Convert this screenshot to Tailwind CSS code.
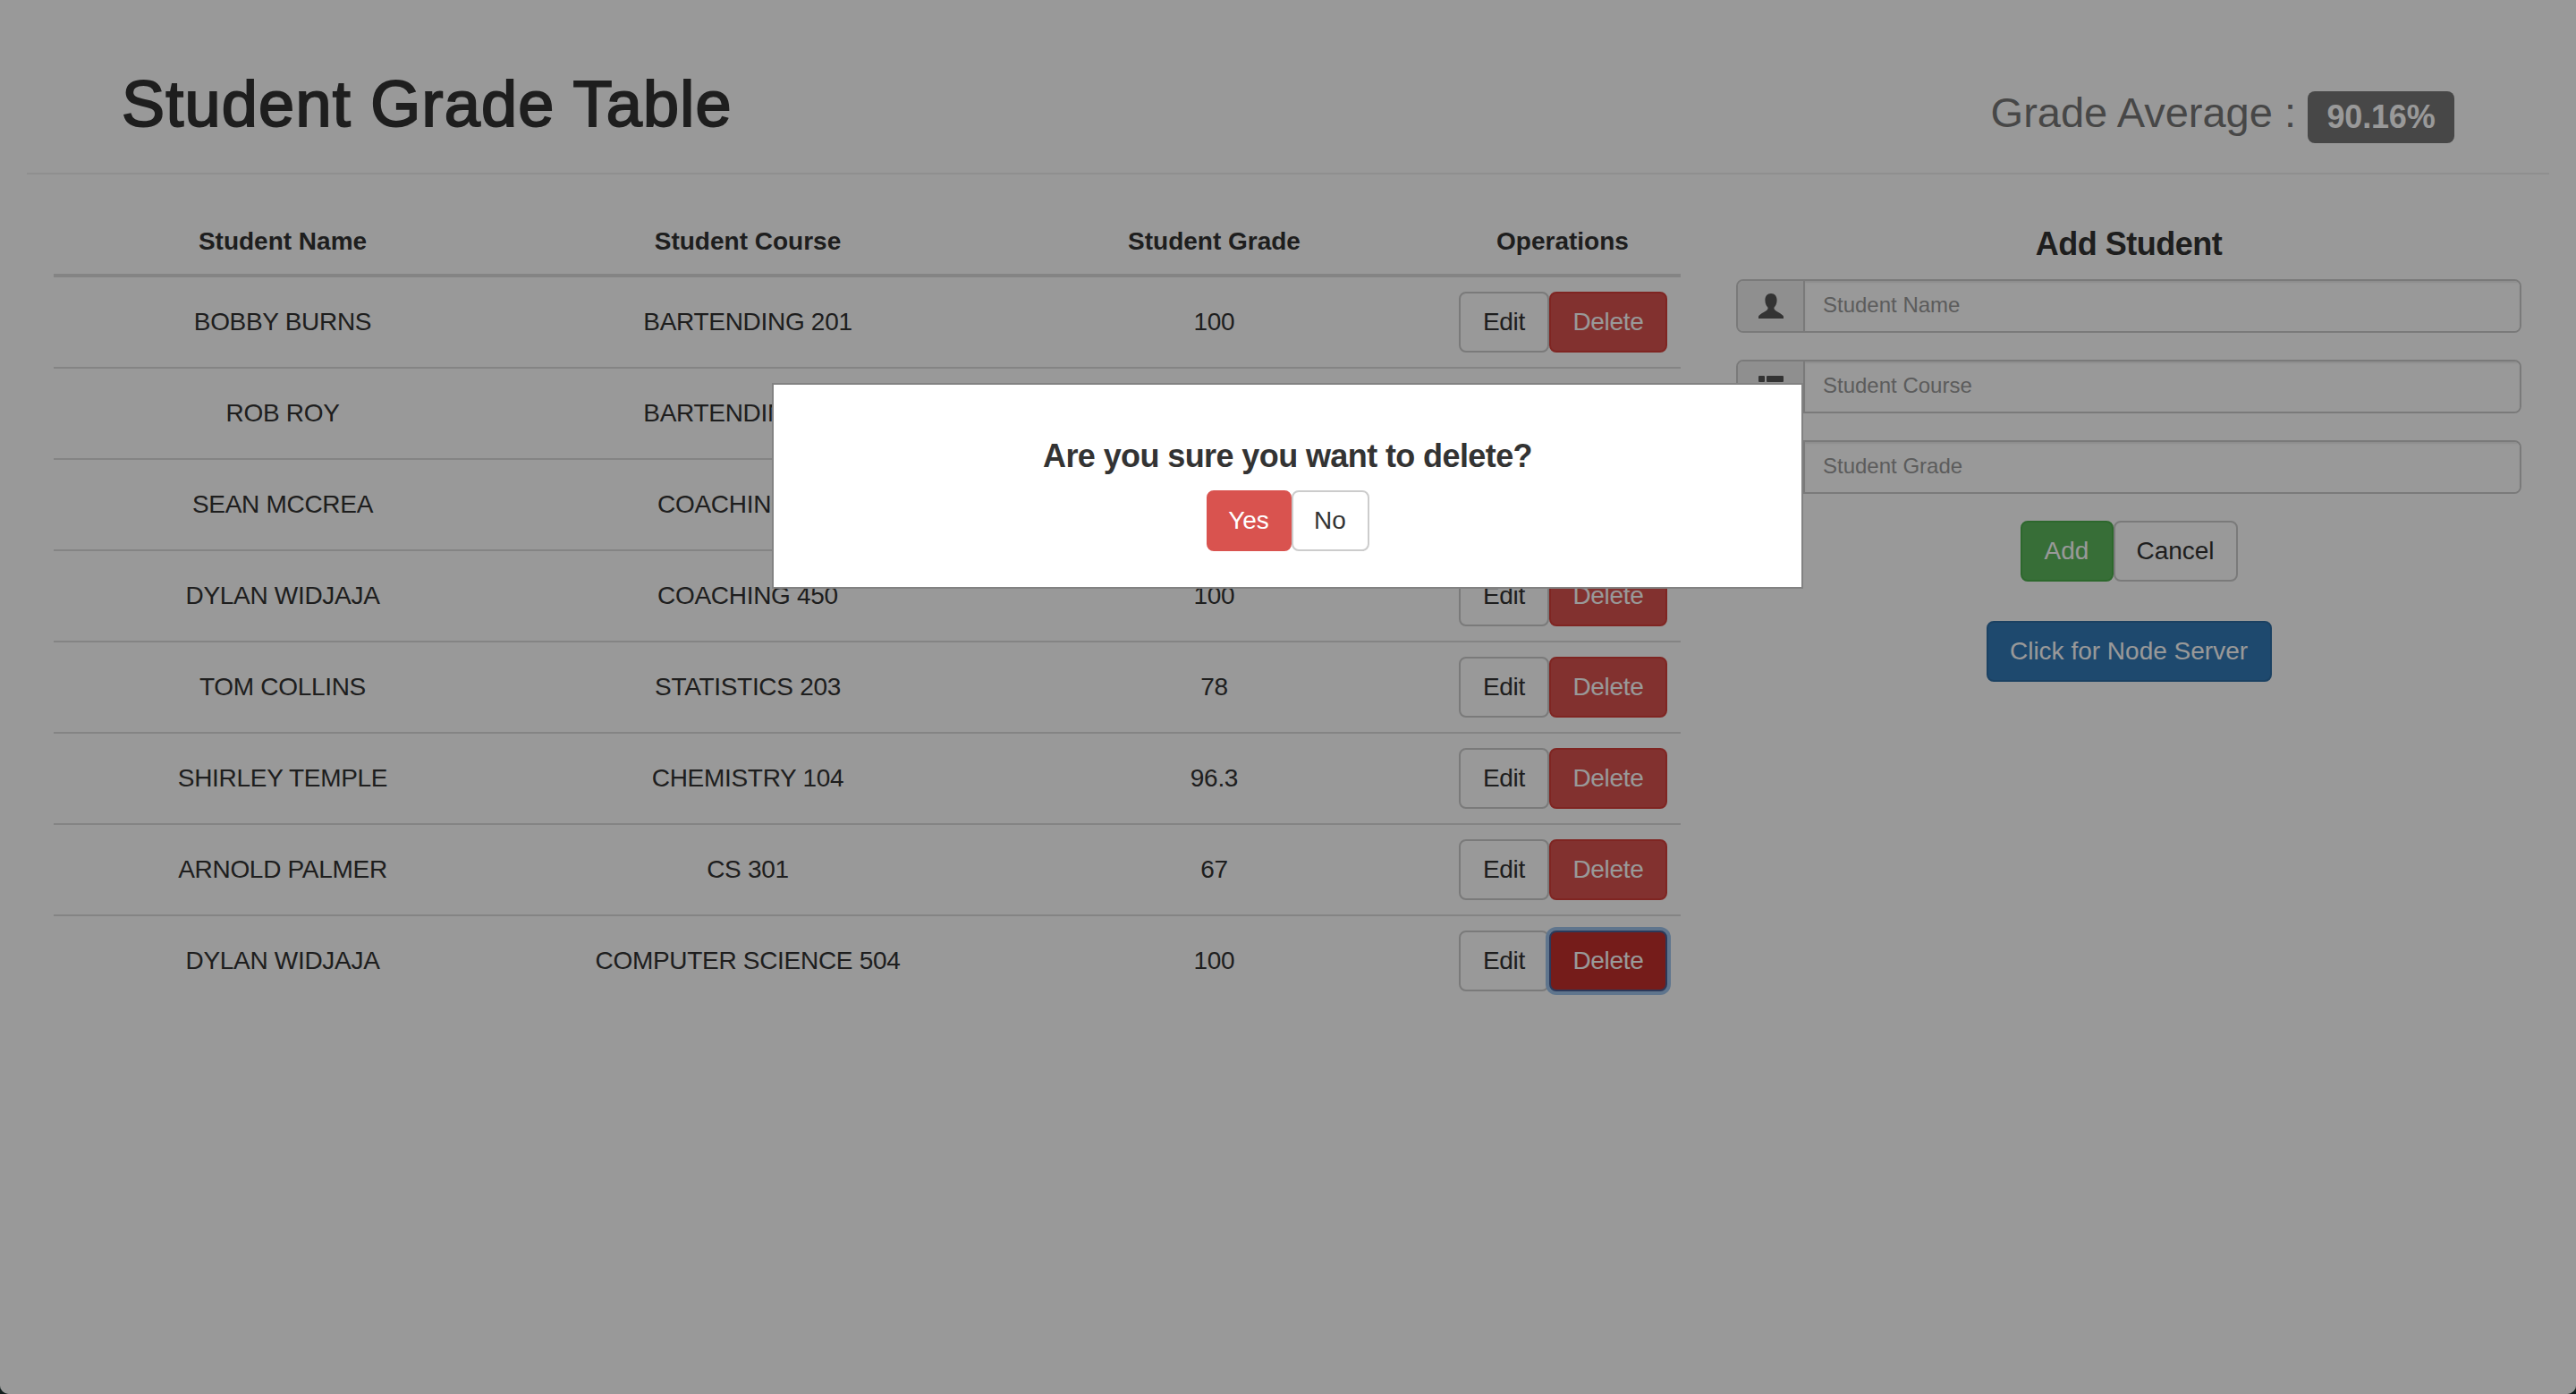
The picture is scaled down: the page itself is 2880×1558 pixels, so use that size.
<!DOCTYPE html>
<html lang="en">
<head>
    <meta charset="UTF-8">
    <title>Student Grade Table</title>
    <script src="https://cdn.jsdelivr.net/npm/@tailwindcss/browser@4"></script>
</head>
<body class="bg-[#14201f] overflow-hidden">
    <div class="relative h-[1558px] overflow-hidden rounded-b-[10px] bg-white font-['Liberation_Sans',Arial,sans-serif] text-[28px] leading-[40px] text-[#333]">
        <!-- Page header -->
        <header class="mx-[30px] flex h-[195px] justify-between border-b-2 border-[#eee]">
            <h1 class="pl-[106px] pt-[80px] text-[72px] leading-[72px] font-normal tracking-[1.25px] text-[#333] [-webkit-text-stroke:2px_#333]">Student Grade Table</h1>
            <div class="flex items-start gap-[13px] pr-[106px] pt-[102px]">
                <span class="text-[47px] leading-[48px] text-[#777]">Grade Average :</span>
                <span class="flex h-[58px] w-[164px] items-center justify-center rounded-lg bg-[#777] text-[36px] font-bold tracking-[-0.2px] text-white">90.16%</span>
            </div>
        </header>

        <main class="ml-[60px] flex gap-[62px] pt-[39px]">
            <!-- Grade table -->
            <table class="h-fit w-[1819px] table-fixed border-separate border-spacing-0 text-center">
                <thead>
                    <tr class="h-[76px]">
                        <th class="w-[512px] border-b-4 border-[#ddd] font-bold">Student Name</th>
                        <th class="w-[528px] border-b-4 border-[#ddd] font-bold">Student Course</th>
                        <th class="w-[515px] border-b-4 border-[#ddd] font-bold">Student Grade</th>
                        <th class="w-[264px] border-b-4 border-[#ddd] font-bold">Operations</th>
                    </tr>
                </thead>
                <tbody class="tracking-[-0.3px]">
                    <tr>
                        <td>BOBBY BURNS</td>
                        <td>BARTENDING 201</td>
                        <td>100</td>
                        <td class="py-4 pl-4">
                            <div class="flex">
                                <button class="h-[68px] w-[101px] rounded-lg border-2 border-[#ccc] bg-white">Edit</button>
                                <button class="h-[68px] w-[132px] rounded-lg border-2 border-[#d43f3a] bg-[#d9534f] text-white">Delete</button>
                            </div>
                        </td>
                    </tr>
                    <tr>
                        <td class="border-t-2 border-[#ddd]">ROB ROY</td>
                        <td class="border-t-2 border-[#ddd]">BARTENDING 201</td>
                        <td class="border-t-2 border-[#ddd]">90</td>
                        <td class="border-t-2 border-[#ddd] py-4 pl-4">
                            <div class="flex">
                                <button class="h-[68px] w-[101px] rounded-lg border-2 border-[#ccc] bg-white">Edit</button>
                                <button class="h-[68px] w-[132px] rounded-lg border-2 border-[#d43f3a] bg-[#d9534f] text-white">Delete</button>
                            </div>
                        </td>
                    </tr>
                    <tr>
                        <td class="border-t-2 border-[#ddd]">SEAN MCCREA</td>
                        <td class="border-t-2 border-[#ddd]">COACHING 450</td>
                        <td class="border-t-2 border-[#ddd]">90</td>
                        <td class="border-t-2 border-[#ddd] py-4 pl-4">
                            <div class="flex">
                                <button class="h-[68px] w-[101px] rounded-lg border-2 border-[#ccc] bg-white">Edit</button>
                                <button class="h-[68px] w-[132px] rounded-lg border-2 border-[#d43f3a] bg-[#d9534f] text-white">Delete</button>
                            </div>
                        </td>
                    </tr>
                    <tr>
                        <td class="border-t-2 border-[#ddd]">DYLAN WIDJAJA</td>
                        <td class="border-t-2 border-[#ddd]">COACHING 450</td>
                        <td class="border-t-2 border-[#ddd]">100</td>
                        <td class="border-t-2 border-[#ddd] py-4 pl-4">
                            <div class="flex">
                                <button class="h-[68px] w-[101px] rounded-lg border-2 border-[#ccc] bg-white">Edit</button>
                                <button class="h-[68px] w-[132px] rounded-lg border-2 border-[#d43f3a] bg-[#d9534f] text-white">Delete</button>
                            </div>
                        </td>
                    </tr>
                    <tr>
                        <td class="border-t-2 border-[#ddd]">TOM COLLINS</td>
                        <td class="border-t-2 border-[#ddd]">STATISTICS 203</td>
                        <td class="border-t-2 border-[#ddd]">78</td>
                        <td class="border-t-2 border-[#ddd] py-4 pl-4">
                            <div class="flex">
                                <button class="h-[68px] w-[101px] rounded-lg border-2 border-[#ccc] bg-white">Edit</button>
                                <button class="h-[68px] w-[132px] rounded-lg border-2 border-[#d43f3a] bg-[#d9534f] text-white">Delete</button>
                            </div>
                        </td>
                    </tr>
                    <tr>
                        <td class="border-t-2 border-[#ddd]">SHIRLEY TEMPLE</td>
                        <td class="border-t-2 border-[#ddd]">CHEMISTRY 104</td>
                        <td class="border-t-2 border-[#ddd]">96.3</td>
                        <td class="border-t-2 border-[#ddd] py-4 pl-4">
                            <div class="flex">
                                <button class="h-[68px] w-[101px] rounded-lg border-2 border-[#ccc] bg-white">Edit</button>
                                <button class="h-[68px] w-[132px] rounded-lg border-2 border-[#d43f3a] bg-[#d9534f] text-white">Delete</button>
                            </div>
                        </td>
                    </tr>
                    <tr>
                        <td class="border-t-2 border-[#ddd]">ARNOLD PALMER</td>
                        <td class="border-t-2 border-[#ddd]">CS 301</td>
                        <td class="border-t-2 border-[#ddd]">67</td>
                        <td class="border-t-2 border-[#ddd] py-4 pl-4">
                            <div class="flex">
                                <button class="h-[68px] w-[101px] rounded-lg border-2 border-[#ccc] bg-white">Edit</button>
                                <button class="h-[68px] w-[132px] rounded-lg border-2 border-[#d43f3a] bg-[#d9534f] text-white">Delete</button>
                            </div>
                        </td>
                    </tr>
                    <tr>
                        <td class="border-t-2 border-[#ddd]">DYLAN WIDJAJA</td>
                        <td class="border-t-2 border-[#ddd]">COMPUTER SCIENCE 504</td>
                        <td class="border-t-2 border-[#ddd]">100</td>
                        <td class="border-t-2 border-[#ddd] py-4 pl-4">
                            <div class="flex">
                                <button class="h-[68px] w-[101px] rounded-lg border-2 border-[#ccc] bg-white">Edit</button>
                                <button class="h-[68px] w-[132px] rounded-lg border-2 border-[#4a5f96] bg-[#c42f2c] text-white shadow-[0_0_0_4px_#9ec4ec]">Delete</button>
                            </div>
                        </td>
                    </tr>
                </tbody>
            </table>

            <!-- Add student form -->
            <aside class="flex w-[878px] flex-col items-center">
                <h4 class="mt-[19px] mb-[19px] text-[36px] leading-[40px] font-bold tracking-[-0.5px]">Add Student</h4>
                <div class="flex w-full flex-col gap-[30px]">
                    <div class="flex h-[60px] overflow-hidden rounded-lg border-2 border-[#ccc]">
                        <span class="flex w-[75px] items-center justify-center border-r-2 border-[#ccc] bg-[#eee] text-[#555]">
                            <svg class="h-[28px] w-[28px]" viewBox="0 0 28 28" fill="currentColor"><path d="M14 0C9.800 0 7.400 3 7.400 7.500c0 3.500 1.300 6.300 3 8 .3 1 .2 2-.6 2.700C8 20 3 22 .3 25 0 25.500 0 26.500 0 28h28c0-1.500 0-2.500-.3-3-2.700-3-7.700-5-9.500-6.800-.8-.7-.9-1.700-.6-2.700 1.700-1.700 3-4.500 3-8C20.600 3 18.200 0 14 0z"/></svg>
                        </span>
                        <input class="min-w-0 flex-1 bg-white px-[20px] pb-[2px] text-[24px] shadow-[inset_0_2px_2px_rgba(0,0,0,0.075)] outline-none placeholder:text-[#999]" placeholder="Student Name">
                    </div>
                    <div class="flex h-[60px] overflow-hidden rounded-lg border-2 border-[#ccc]">
                        <span class="flex w-[75px] items-center justify-center border-r-2 border-[#ccc] bg-[#eee] text-[#555]">
                            <svg class="h-[28px] w-[28px]" viewBox="0 0 28 28" fill="currentColor"><rect x="0" y="2" width="7" height="7" rx="1"/><rect x="9" y="2" width="19" height="7" rx="1"/><rect x="0" y="11" width="7" height="7" rx="1"/><rect x="9" y="11" width="19" height="7" rx="1"/><rect x="0" y="20" width="7" height="7" rx="1"/><rect x="9" y="20" width="19" height="7" rx="1"/></svg>
                        </span>
                        <input class="min-w-0 flex-1 bg-white px-[20px] pb-[2px] text-[24px] shadow-[inset_0_2px_2px_rgba(0,0,0,0.075)] outline-none placeholder:text-[#999]" placeholder="Student Course">
                    </div>
                    <div class="flex h-[60px] overflow-hidden rounded-lg border-2 border-[#ccc]">
                        <span class="flex w-[75px] items-center justify-center border-r-2 border-[#ccc] bg-[#eee] text-[#555]">
                            <svg class="h-[28px] w-[28px]" viewBox="0 0 28 28" fill="currentColor"><path d="M14 4 0 11l14 7 14-7zM6 17v6c4 3 12 3 16 0v-6l-8 4z"/></svg>
                        </span>
                        <input class="min-w-0 flex-1 bg-white px-[20px] pb-[2px] text-[24px] shadow-[inset_0_2px_2px_rgba(0,0,0,0.075)] outline-none placeholder:text-[#999]" placeholder="Student Grade">
                    </div>
                </div>
                <div class="mt-[30px] flex">
                    <button class="h-[68px] w-[104px] rounded-lg border-2 border-[#4cae4c] bg-[#5cb85c] text-white">Add</button>
                    <button class="h-[68px] w-[139px] rounded-lg border-2 border-[#ccc] bg-white">Cancel</button>
                </div>
                <button class="mt-[44px] h-[68px] w-[319px] rounded-lg border-2 border-[#2e6da4] bg-[#337ab7] text-white">Click for Node Server</button>
            </aside>
        </main>

        <!-- Modal backdrop and dialog -->
        <div class="absolute inset-0 bg-black/40"></div>
        <div class="absolute top-[430px] left-[865px] flex h-[226px] w-[1149px] flex-col items-center bg-white pt-[60px] shadow-[0_0_0_2px_#828282]">
            <h4 class="mb-[18px] text-[36px] leading-[40px] font-bold tracking-[-0.6px]">Are you sure you want to delete?</h4>
            <div class="flex">
                <button class="h-[68px] w-[95px] rounded-lg border-2 border-[#d9534f] bg-[#d9534f] text-white">Yes</button>
                <button class="h-[68px] w-[87px] rounded-lg border-2 border-[#ccc] bg-white">No</button>
            </div>
        </div>
    </div>
</body>
</html>
